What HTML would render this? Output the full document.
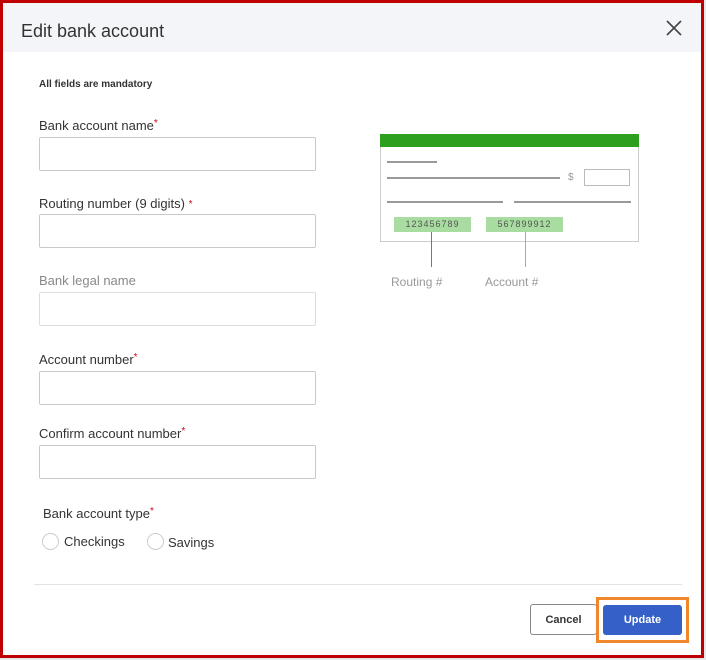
<!DOCTYPE html>
<html><head><style>
*{margin:0;padding:0;box-sizing:border-box}
body{width:706px;height:660px;background:#e8e8e8;position:relative;font-family:"Liberation Sans",Arial,sans-serif;overflow:hidden}
.frame{position:absolute;left:0;top:0;width:704px;height:658px;border:3px solid #c00000;background:#fff}
.hdr{position:absolute;left:0;top:0;width:698px;height:49px;background:#f4f5f8}
.t{position:absolute;font-size:13px;color:#333}
.r{color:#d0021b;font-size:10px;vertical-align:top}
.in{position:absolute;left:36px;width:277px;height:34px;border:1px solid #c9c9c9;border-radius:2px;background:#fff}
.ab{position:absolute}
</style></head><body>
<div class="frame">
<div class="hdr"></div>
<div class="t" style="left:18px;top:18px;font-size:18px;color:#333">Edit bank account</div>
<svg class="ab" style="left:663px;top:17px" width="16" height="16"><path d="M1 1L15 15M15 1L1 15" stroke="#444" stroke-width="1.6"/></svg>
<div class="t" style="left:36px;top:76px;font-size:10px;font-weight:bold;color:#333">All fields are mandatory</div>
<div class="t" style="left:36px;top:115px">Bank account name<span class="r">*</span></div>
<div class="in" style="top:134px"></div>
<div class="t" style="left:36px;top:193px">Routing number (9 digits) <span class="r" style="vertical-align:middle">*</span></div>
<div class="in" style="top:211px"></div>
<div class="t" style="left:36px;top:270px;color:#888">Bank legal name</div>
<div class="in" style="top:289px;border-color:#ddd"></div>
<div class="t" style="left:36px;top:349px">Account number<span class="r">*</span></div>
<div class="in" style="top:368px"></div>
<div class="t" style="left:36px;top:423px">Confirm account number<span class="r">*</span></div>
<div class="in" style="top:442px"></div>
<div class="t" style="left:40px;top:503px">Bank account type<span class="r">*</span></div>
<div class="ab" style="left:39px;top:530px;width:17px;height:17px;border:1px solid #ccc;border-radius:50%"></div>
<div class="t" style="left:61px;top:531px">Checkings</div>
<div class="ab" style="left:144px;top:530px;width:17px;height:17px;border:1px solid #ccc;border-radius:50%"></div>
<div class="t" style="left:165px;top:532px">Savings</div>
<div class="ab" style="left:31px;top:581px;width:648px;height:1px;background:#e3e3e3"></div>
<div class="ab" style="left:527px;top:601px;width:67px;height:31px;border:1px solid #888;border-radius:3px;font-size:11px;font-weight:bold;color:#333;text-align:center;line-height:30px">Cancel</div>
<div class="ab" style="left:600px;top:602px;width:79px;height:30px;background:#3560c8;border-radius:3px;font-size:11px;font-weight:bold;color:#fff;text-align:center;line-height:30px">Update</div>
<div class="ab" style="left:593px;top:594px;width:93px;height:46px;border:3px solid #f0872d"></div>
<div class="ab" style="left:377px;top:131px;width:259px;height:108px;border:1px solid #ccc;background:#fff"></div>
<div class="ab" style="left:377px;top:131px;width:259px;height:13px;background:#2c9f1f"></div>
<div class="ab" style="left:384px;top:158px;width:50px;height:2px;background:#999"></div>
<div class="ab" style="left:384px;top:174px;width:173px;height:2px;background:#999"></div>
<div class="t" style="left:565px;top:169px;font-size:10px;color:#999">$</div>
<div class="ab" style="left:581px;top:166px;width:46px;height:17px;border:1px solid #bbb"></div>
<div class="ab" style="left:384px;top:198px;width:116px;height:2px;background:#999"></div>
<div class="ab" style="left:511px;top:198px;width:117px;height:2px;background:#999"></div>
<div class="ab" style="left:391px;top:214px;width:77px;height:15px;background:#a8dca0;font-size:9px;color:#555;text-align:center;line-height:15px;letter-spacing:1px">123456789</div>
<div class="ab" style="left:483px;top:214px;width:77px;height:15px;background:#a8dca0;font-size:9px;color:#555;text-align:center;line-height:15px;letter-spacing:1px">567899912</div>
<div class="ab" style="left:428px;top:229px;width:1px;height:35px;background:#777"></div>
<div class="ab" style="left:522px;top:229px;width:1px;height:35px;background:#aaa"></div>
<div class="t" style="left:388px;top:272px;font-size:12px;color:#999">Routing #</div>
<div class="t" style="left:482px;top:272px;font-size:12px;color:#999">Account #</div>
</div>
</body></html>
